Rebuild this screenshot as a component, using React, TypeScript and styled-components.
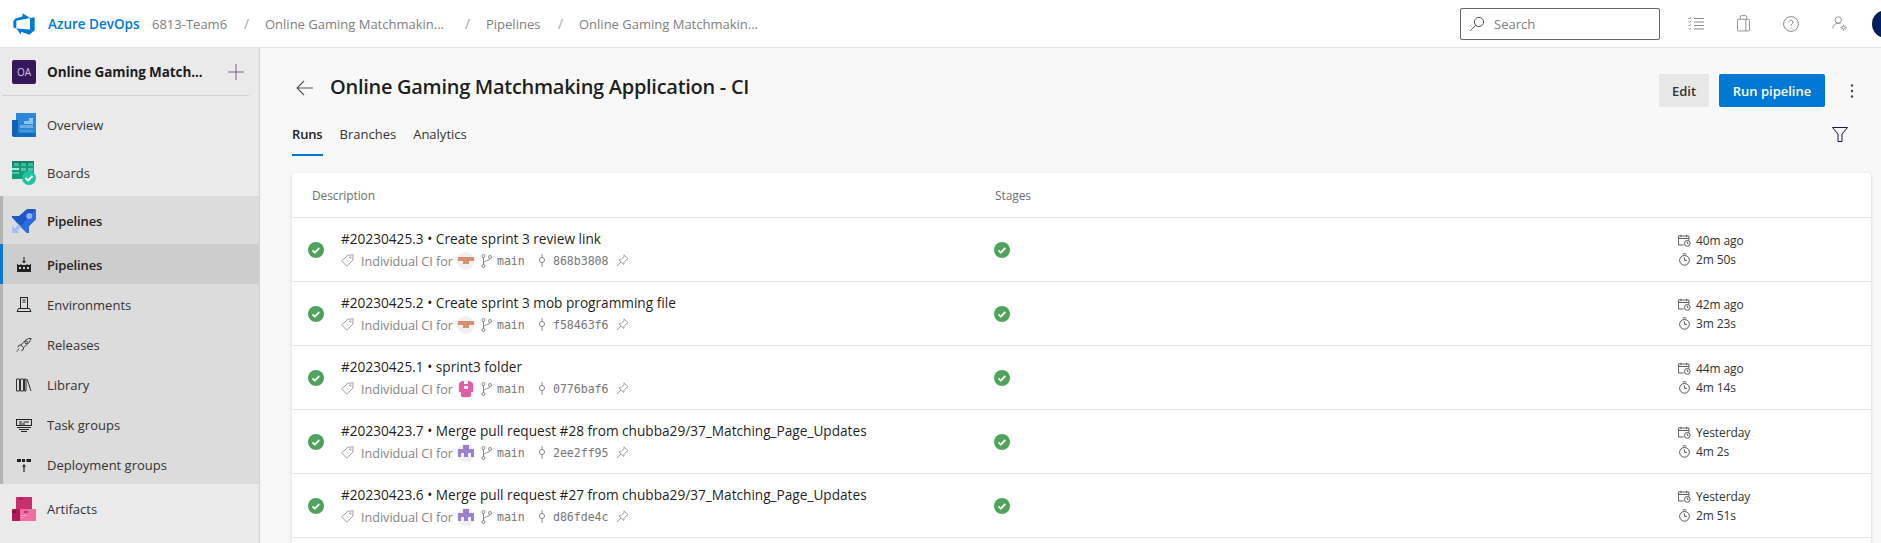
import React from 'react';
import styled, { createGlobalStyle } from 'styled-components';

const GlobalStyle = createGlobalStyle`
  html, body {
    margin: 0;
    height: 543px;
    overflow: hidden;
    background: #f8f8f8;
    font-family: "Open Sans", "Liberation Sans", sans-serif;
    color: rgba(0, 0, 0, 0.9);
  }
  * { box-sizing: border-box; }
  svg { flex-shrink: 0; }
`;

const Page = styled.div`
  display: flex;
  flex-direction: column;
  width: 1881px;
  height: 543px;
  overflow: hidden;
`;

/* top bar */
const Header = styled.header`
  display: flex;
  align-items: center;
  flex: 0 0 48px;
  height: 48px;
  padding-left: 12px;
  background: #fff;
  border-bottom: 1px solid #e2e2e2;
`;
const Brand = styled.div`
  font-size: 13.5px;
  font-weight: 600;
  color: #0078d4;
  margin-left: 12px;
  width: 104px;
  white-space: nowrap;
`;
const Crumb = styled.div<{ $width: number }>`
  width: ${(p) => p.$width}px;
  font-size: 13px;
  color: #808080;
  white-space: nowrap;
`;
const Slash = styled.div`
  width: 21px;
  font-size: 14px;
  color: #a6a6a6;
`;
const SearchBox = styled.div`
  display: flex;
  align-items: center;
  gap: 9px;
  width: 200px;
  height: 32px;
  margin-left: auto;
  padding-left: 8px;
  border: 1px solid #666;
  border-radius: 2px;
  font-size: 13px;
  color: #808080;
`;
const HeaderIcons = styled.div`
  display: flex;
  align-items: center;
  gap: 33px;
  width: 221px;
  height: 100%;
  padding-left: 28px;
  overflow: hidden;
`;
const Avatar = styled.div`
  flex: 0 0 28px;
  height: 28px;
  margin-left: -9px;
  border-radius: 50%;
  background: #00205b;
`;

const Body = styled.div`
  display: flex;
  flex: 1;
  min-height: 0;
`;

/* left navigation */
const Sidebar = styled.nav`
  flex: 0 0 260px;
  background: #eaeaea;
  border-right: 1px solid #d0d0d0;
`;
const ProjectRow = styled.div`
  display: flex;
  align-items: center;
  height: 48px;
  margin: 0 10px 4px 2px;
  padding: 0 5px 0 10px;
  border-bottom: 1px solid #d2d2d2;
`;
const ProjectBadge = styled.div`
  display: flex;
  align-items: center;
  justify-content: center;
  width: 24px;
  height: 24px;
  border-radius: 2px;
  background: #35185c;
  color: #cfc6dc;
  font-size: 10px;
`;
const ProjectName = styled.div`
  flex: 1;
  margin-left: 11px;
  font-size: 13.5px;
  font-weight: 700;
  letter-spacing: -0.1px;
  white-space: nowrap;
`;
const NavTop = styled.div`
  display: flex;
  align-items: center;
  gap: 11px;
  height: 48px;
  padding: 2px 0 0 12px;
  font-size: 13px;
  color: #333;
`;
const NavGroup = styled.div`
  background: #dcdcdc;
  border-left: 3px solid #b4b4b4;
`;
const NavGroupTitle = styled(NavTop)`
  padding-left: 9px;
  font-weight: 600;
  letter-spacing: -0.15px;
  color: #222;
`;
const NavSub = styled.div<{ $selected?: boolean }>`
  position: relative;
  display: flex;
  align-items: center;
  gap: 15px;
  height: 40px;
  padding: 1px 0 0 13px;
  font-size: 13px;
  letter-spacing: ${(p) => (p.$selected ? '-0.15px' : '0')};
  font-weight: ${(p) => (p.$selected ? 600 : 400)};
  color: ${(p) => (p.$selected ? '#222' : '#333')};
  background: ${(p) => (p.$selected ? '#cdcdcd' : 'transparent')};
  border-radius: ${(p) => (p.$selected ? '0 3px 3px 0' : '0')};
  ${(p) =>
    p.$selected &&
    `&::before {
      content: '';
      position: absolute;
      left: -3px;
      top: 0;
      bottom: 0;
      width: 3px;
      background: #0078d4;
    }`}
`;

/* main column */
const Main = styled.main`
  flex: 1;
  min-width: 0;
  padding: 26px 10px 0 32px;
  background: #f8f8f8;
`;
const TitleRow = styled.div`
  display: flex;
  align-items: center;
  height: 33px;
`;
const BackArrow = styled.div`
  display: flex;
  width: 38px;
  padding-left: 4px;
  margin-bottom: 6px;
`;
const Title = styled.h1`
  flex: 1;
  margin: 0 0 8px;
  font-size: 20px;
  font-weight: 600;
  letter-spacing: -0.28px;
  white-space: nowrap;
`;
const Button = styled.div<{ $primary?: boolean }>`
  display: flex;
  align-items: center;
  justify-content: center;
  width: ${(p) => (p.$primary ? 106 : 50)}px;
  height: 33px;
  margin-left: 10px;
  border-radius: 2px;
  font-size: 13px;
  font-weight: 600;
  background: ${(p) => (p.$primary ? '#0078d4' : '#e8e8e8')};
  color: ${(p) => (p.$primary ? '#fff' : '#333')};
`;
const More = styled.div`
  display: flex;
  justify-content: center;
  width: 46px;
  padding-left: 8px;
`;
const TabRow = styled.div`
  display: flex;
  align-items: center;
  gap: 17px;
  height: 49px;
  margin-top: 2px;
  padding-top: 1px;
  padding-right: 23px;
`;
const Tab = styled.div<{ $active?: boolean }>`
  position: relative;
  font-size: 13px;
  letter-spacing: ${(p) => (p.$active ? '-0.15px' : '0')};
  font-weight: ${(p) => (p.$active ? 600 : 400)};
  color: ${(p) => (p.$active ? '#222' : '#333')};
  ${(p) =>
    p.$active &&
    `&::after {
      content: '';
      position: absolute;
      left: 0;
      right: 0;
      bottom: -13px;
      height: 2px;
      background: #0078d4;
    }`}
`;
const FilterSlot = styled.div`
  display: flex;
  margin-left: auto;
`;
const Card = styled.section`
  margin-top: 15px;
  padding-bottom: 20px;
  background: #fff;
  border-radius: 4px 4px 0 0;
  box-shadow: 0 1px 4px rgba(0, 0, 0, 0.14);
`;
const HeadRow = styled.div`
  display: grid;
  grid-template-columns: 683px 1fr;
  align-items: center;
  height: 45px;
  padding-left: 20px;
  font-size: 12px;
  letter-spacing: -0.1px;
  color: #707070;
  border-bottom: 1px solid #e8e8e8;
`;
const Row = styled.div`
  display: grid;
  grid-template-columns: 33px 653px 684px 1fr;
  align-items: center;
  height: 64px;
  padding-left: 16px;
  border-bottom: 1px solid #e8e8e8;
`;
const RunInfo = styled.div`
  display: flex;
  flex-direction: column;
  gap: 4px;
`;
const RunTitle = styled.div`
  font-size: 13.65px;
  font-weight: 500;
  line-height: 18px;
  white-space: nowrap;
`;
const RunMeta = styled.div`
  display: flex;
  align-items: center;
  height: 18px;
  font-size: 12.7px;
  letter-spacing: -0.05px;
  color: #858585;
`;
const MetaText = styled.span`
  width: 90px;
  margin-left: 7px;
  white-space: nowrap;
`;
const Mono = styled.span<{ $width: number }>`
  width: ${(p) => p.$width}px;
  margin-left: 5px;
  font-family: "DejaVu Sans Mono", "Liberation Mono", monospace;
  font-size: 11.6px;
  color: #777;
`;
const AvatarCircle = styled.span`
  display: flex;
  align-items: center;
  justify-content: center;
  flex: 0 0 18px;
  height: 18px;
  margin: 0 6px;
  border-radius: 50%;
  background: #f0f0f0;
  overflow: hidden;
`;
const Stamps = styled.div`
  display: flex;
  flex-direction: column;
`;
const Stamp = styled.div`
  display: flex;
  align-items: center;
  gap: 5px;
  height: 19px;
  font-size: 12px;
  letter-spacing: -0.1px;
  color: #333;
`;

/* drawings */
const AzureLogo = () => (
  <svg width="24" height="24" viewBox="0 0 18 18" fill="#0078d4">
    <path d="M17 4v9.74l-4 3.28-6.2-2.26V17L3.29 12.41l10.23.8V4.44Zm-3.41.49L7.85 1v2.29L2.58 4.84 1 6.87v4.61l2.26 1V6.57z" />
  </svg>
);
const SearchIcon = () => (
  <svg width="16" height="16" viewBox="0 0 16 16" fill="none" stroke="#555" strokeWidth="1">
    <circle cx="10" cy="6" r="4.6" />
    <path d="M6.6 9.4L1.2 14.8" />
  </svg>
);
const TaskListIcon = () => (
  <svg width="16" height="16" viewBox="0 0 16 16" fill="none" stroke="#8a8a8a" strokeWidth="1">
    <path d="M6 2.5h10M6 6h10M6 9.5h10M6 13h10" />
    <path d="M.5 2l1 1 1.6-1.800M.5 5.500l1 1 1.600-1.800M.5 9l1 1 1.600-1.800M.5 12.500l1 1 1.600-1.800" />
  </svg>
);
const BagIcon = () => (
  <svg width="13" height="17" viewBox="0 0 14 18" fill="none" stroke="#8a8a8a" strokeWidth="1">
    <rect x="0.5" y="4.5" width="13" height="12.5" rx="1" />
    <path d="M3.5 4.5V2a1.500 1.500 0 0 1 1.500-1.500h4A1.500 1.500 0 0 1 10.500 2v2.500M9.500 4.500V17" />
  </svg>
);
const HelpIcon = () => (
  <svg width="16" height="16" viewBox="0 0 16 16" fill="none" stroke="#8a8a8a" strokeWidth="1">
    <circle cx="8" cy="8" r="7.400" />
    <path d="M6 6.200a2 2 0 1 1 3.200 1.600C8.400 8.400 8 8.800 8 9.800M8 11.400v1" />
  </svg>
);
const UserGearIcon = () => (
  <svg width="16" height="16" viewBox="0 0 18 18" fill="none" stroke="#8a8a8a" strokeWidth="1">
    <circle cx="7" cy="4.500" r="3.600" />
    <path d="M1 14c0-3.400 2.400-5.800 6-5.800 1 0 1.800.2 2.600.5" />
    <circle cx="13" cy="13" r="1.800" />
    <path d="M13 9.600v1.400M13 15v1.400M9.600 13H11M15 13h1.400M10.800 10.800l.8.8M14.400 14.400l.8.8M10.800 15.200l.8-.8M14.400 11.600l.8-.8" />
  </svg>
);
const PlusIcon = () => (
  <svg width="16" height="16" viewBox="0 0 16 16" stroke="#7a5f8a" strokeWidth="1">
    <path d="M0 8h16M8 0v16" />
  </svg>
);
const OverviewIcon = () => (
  <svg width="24" height="24" viewBox="0 0 24 24">
    <path d="M4 0h20v24H4z" fill="#2b88d8" />
    <path d="M0 7h6v17H2a2 2 0 0 1-2-2z" fill="#0f5fb5" />
    <path d="M17 5h4v6h-4zM12 8h5v3h-5z" fill="#8cc4f0" />
    <path d="M8 12h13v3H8z" fill="#6aaee6" />
    <path d="M8 17h13v2H8z" fill="#4a98dc" />
    <path d="M4 20h20v2a2 2 0 0 1-2 2H4z" fill="#0f6cbd" />
  </svg>
);
const BoardsIcon = () => (
  <svg width="24" height="24" viewBox="0 0 24 24">
    <path d="M0 0h22v18H0z" fill="#1a9a7d" />
    <path d="M0 0h22v4H0z" fill="#15806c" />
    <path d="M2 2h5v3H2zM9 2h5v3H9zM16 2h5v3h-5z" fill="#3dbb9d" />
    <path d="M0 7h7v2H0z" fill="#a6ecd8" />
    <path d="M0 11h7v2H0zM9 7h5v3H9zM16 7h5v3h-5z" fill="#4cc7a8" />
    <circle cx="17" cy="17" r="7" fill="#22c3a0" />
    <path d="M13.500 17l2.500 2.500 4.500-4.500" fill="none" stroke="#fff" strokeWidth="1.800" />
  </svg>
);
const PipelinesBigIcon = () => (
  <svg width="24" height="24" viewBox="0 0 24 24">
    <path d="M24 1.500V10l-7 7v7h-2l-3.500-3.500L5 14l-3-3.500L0 8.500V7h7l8-7h7.500A1.500 1.500 0 0 1 24 1.500z" fill="#1f57c8" />
    <path d="M24 1.500V10l-7 7v7h-2l-3.500-3.500-3-3L23.500.500c.300.200.500.600.500 1z" fill="#2f6be0" />
    <circle cx="17.300" cy="7" r="3" fill="#8fb1f2" />
    <path d="M0 16.500v7.500h7.500L5.200 21.700l4-4-2.400-2.400-4 4z" fill="#a4bdf3" />
  </svg>
);
const ArtifactsIcon = () => (
  <svg width="24" height="24" viewBox="0 0 24 24">
    <path d="M4 0h16v12H4z" fill="#c9306f" />
    <path d="M7 1h4v2H7z" fill="#a5245c" />
    <path d="M0 12h8v12H0z" fill="#b01a58" />
    <path d="M0 14h4v2H0z" fill="#7e1341" />
    <path d="M8 12h16v12H8z" fill="#ef6fa2" />
    <path d="M12 14h4v2h-4z" fill="#c9306f" />
    <path d="M9 18h5v1H9zM9 20h3v1H9z" fill="#f8b0cb" />
  </svg>
);
const PipelinesSmall = () => (
  <svg width="16" height="16" viewBox="0 0 16 16" fill="#222">
    <path d="M7.500 0h1v4h1.500L8 6.500 6 4h1.500z" />
    <path d="M1 7h1v1h2.500V7h1v1h5V7h1v1H14V7h1v8H1zM3 10v2h2v-2zm4 0v2h2v-2zm4 0v2h2v-2z" />
  </svg>
);
const EnvironmentsIcon = () => (
  <svg width="16" height="16" viewBox="0 0 16 16" fill="none" stroke="#222" strokeWidth="1">
    <rect x="4.500" y="0.500" width="7" height="11" />
    <path d="M6.500 3h3M6.500 5h3M2.500 11.500h11l1.500 3H1z" />
  </svg>
);
const ReleasesIcon = () => (
  <svg width="16" height="16" viewBox="0 0 18 16" fill="none" stroke="#222" strokeWidth="1">
    <path d="M17 .5c-4 0-7 2-9 5L5.500 8l3 3 2.500-2.500c3-2 5-4.500 6-8z" />
    <circle cx="11.500" cy="5" r="1.500" />
    <path d="M5.500 8L3 8.500 2 10.500M8.500 11l-.5 2.500-2 1M3.500 12l-2 2M1 15.500l1-1" />
  </svg>
);
const LibraryIcon = () => (
  <svg width="16" height="16" viewBox="0 0 16 16" fill="none" stroke="#333" strokeWidth="1">
    <path d="M.5 2h3v12h-3zM4.500 2h3v12h-3zM8.500 2h1.500v12H8.500zM11 2l4 12" />
  </svg>
);
const TaskGroupsIcon = () => (
  <svg width="16" height="16" viewBox="0 0 16 16" fill="none" stroke="#222" strokeWidth="1">
    <rect x="0.500" y="2.500" width="15" height="6" />
    <path d="M3 5h3M7.500 5H13M3 7h6M1 10.500h14M3 12.500h10M5 14.500h6" />
  </svg>
);
const DeploymentIcon = () => (
  <svg width="16" height="16" viewBox="0 0 16 16" fill="#222">
    <path d="M1 2h4v3H1zM6 2h3v3H6zM10.500 2H15v3h-4.500z" />
    <path d="M8 7l2 2.500H8.600V15H7.400V9.500H6z" />
  </svg>
);
const BackIcon = () => (
  <svg width="17" height="16" viewBox="0 0 17 16" fill="none" stroke="#555" strokeWidth="1.100">
    <path d="M17 8H1M8 1L1 8l7 7" />
  </svg>
);
const DotsIcon = () => (
  <svg width="4" height="14" viewBox="0 0 4 14" fill="#444">
    <circle cx="2" cy="1.500" r="1.200" />
    <circle cx="2" cy="7" r="1.200" />
    <circle cx="2" cy="12.500" r="1.200" />
  </svg>
);
const FilterIcon = () => (
  <svg width="16" height="15" viewBox="0 0 16 15" fill="none" stroke="#2b0f3f" strokeWidth="1">
    <path d="M.5 .5h15L10 7v7.500H6V7z" />
  </svg>
);
const SuccessIcon = () => (
  <svg width="16" height="16" viewBox="0 0 16 16">
    <circle cx="8" cy="8" r="8" fill="#4fa35c" />
    <path d="M4.500 8.300l2.300 2.300 4.500-4.600" fill="none" stroke="#fff" strokeWidth="1.800" />
  </svg>
);
const TagIcon = () => (
  <svg width="13" height="13" viewBox="0 0 14 14" fill="none" stroke="#9a9a9a" strokeWidth="1">
    <path d="M.8 7.500L7 1.500 13 .8l-.4 6-6.300 6.400z" />
    <circle cx="10.200" cy="3.700" r=".8" />
  </svg>
);
const BranchIcon = () => (
  <svg width="11" height="14" viewBox="0 0 11 14" fill="none" stroke="#8a8a8a" strokeWidth="1">
    <circle cx="2.500" cy="2" r="1.500" />
    <circle cx="2.500" cy="12" r="1.500" />
    <circle cx="9" cy="3" r="1.500" />
    <path d="M2.500 3.500v7M9 4.500c0 2.500-6.500 2-6.500 5" />
  </svg>
);
const CommitIcon = () => (
  <svg width="10" height="14" viewBox="0 0 10 14" fill="none" stroke="#8a8a8a" strokeWidth="1">
    <circle cx="4" cy="6" r="2.500" />
    <path d="M4 0v3.500M4 8.500V13" />
  </svg>
);
const PinIcon = () => (
  <svg width="13" height="13" viewBox="0 0 13 13" fill="none" stroke="#a0a0a0" strokeWidth="1">
    <path d="M8 .8l4.200 4.200-1.500.5-2.700 2.700-.3 2.300L3 5.800l2.300-.3L8 2.800zM5 8l-4 4" />
  </svg>
);
const CalendarIcon = () => (
  <svg width="13" height="13" viewBox="0 0 16 16" fill="none" stroke="#555" strokeWidth="1.200">
    <path d="M7 13.500H.5v-11h13V8M.5 5.500h13M3.500 1v2.500M10.500 1v2.500" />
    <circle cx="11.500" cy="11.500" r="3.500" />
    <path d="M11.500 9.500v2h1.500" />
  </svg>
);
const TimerIcon = () => (
  <svg width="13" height="13" viewBox="0 0 16 16" fill="none" stroke="#555" strokeWidth="1.200">
    <circle cx="8" cy="9" r="6" />
    <path d="M6 1h4M8 5.500V9h3" />
  </svg>
);

type Tint = 'salmon' | 'pink' | 'violet';

const Identicon = ({ tint }: { tint: Tint }) => {
  if (tint === 'salmon') {
    return (
      <svg width="18" height="18" viewBox="0 0 18 18" fill="#d98e72">
        <path d="M1 5h16v4h-5v3H6V9H1z" />
      </svg>
    );
  }
  if (tint === 'pink') {
    return (
      <svg width="18" height="18" viewBox="0 0 18 18" fill="#de5fa6">
        <path d="M2 1h5v3h4V1h5v11h-2v5H4v-5H2zM7 6v3h4V6z" />
      </svg>
    );
  }
  return (
    <svg width="18" height="18" viewBox="0 0 18 18" fill="#9b7fd0">
      <path d="M6 1h6v4h5v8h-3V9h-3v4H7V9H4v4H1V5h5z" />
    </svg>
  );
};

const runs: { id: string; message: string; tint: Tint; commit: string; when: string; took: string }[] = [
  { id: '#20230425.3', message: 'Create sprint 3 review link', tint: 'salmon', commit: '868b3808', when: '40m ago', took: '2m 50s' },
  { id: '#20230425.2', message: 'Create sprint 3 mob programming file', tint: 'salmon', commit: 'f58463f6', when: '42m ago', took: '3m 23s' },
  { id: '#20230425.1', message: 'sprint3 folder', tint: 'pink', commit: '0776baf6', when: '44m ago', took: '4m 14s' },
  { id: '#20230423.7', message: 'Merge pull request #28 from chubba29/37_Matching_Page_Updates', tint: 'violet', commit: '2ee2ff95', when: 'Yesterday', took: '4m 2s' },
  { id: '#20230423.6', message: 'Merge pull request #27 from chubba29/37_Matching_Page_Updates', tint: 'violet', commit: 'd86fde4c', when: 'Yesterday', took: '2m 51s' },
];

const App = () => (
  <Page>
    <GlobalStyle />
    <Header>
      <AzureLogo />
      <Brand>Azure DevOps</Brand>
      <Crumb $width={92}>6813-Team6</Crumb>
      <Slash>/</Slash>
      <Crumb $width={200}>Online Gaming Matchmakin...</Crumb>
      <Slash>/</Slash>
      <Crumb $width={72}>Pipelines</Crumb>
      <Slash>/</Slash>
      <Crumb $width={190}>Online Gaming Matchmakin...</Crumb>
      <SearchBox>
        <SearchIcon />
        Search
      </SearchBox>
      <HeaderIcons>
        <TaskListIcon />
        <BagIcon />
        <HelpIcon />
        <UserGearIcon />
        <Avatar />
      </HeaderIcons>
    </Header>
    <Body>
      <Sidebar>
        <ProjectRow>
          <ProjectBadge>OA</ProjectBadge>
          <ProjectName>Online Gaming Match...</ProjectName>
          <PlusIcon />
        </ProjectRow>
        <NavTop>
          <OverviewIcon />
          Overview
        </NavTop>
        <NavTop>
          <BoardsIcon />
          Boards
        </NavTop>
        <NavGroup>
          <NavGroupTitle>
            <PipelinesBigIcon />
            Pipelines
          </NavGroupTitle>
          <NavSub $selected>
            <PipelinesSmall />
            Pipelines
          </NavSub>
          <NavSub>
            <EnvironmentsIcon />
            Environments
          </NavSub>
          <NavSub>
            <ReleasesIcon />
            Releases
          </NavSub>
          <NavSub>
            <LibraryIcon />
            Library
          </NavSub>
          <NavSub>
            <TaskGroupsIcon />
            Task groups
          </NavSub>
          <NavSub>
            <DeploymentIcon />
            Deployment groups
          </NavSub>
        </NavGroup>
        <NavTop>
          <ArtifactsIcon />
          Artifacts
        </NavTop>
      </Sidebar>
      <Main>
        <TitleRow>
          <BackArrow>
            <BackIcon />
          </BackArrow>
          <Title>Online Gaming Matchmaking Application - CI</Title>
          <Button>Edit</Button>
          <Button $primary>Run pipeline</Button>
          <More>
            <DotsIcon />
          </More>
        </TitleRow>
        <TabRow>
          <Tab $active>Runs</Tab>
          <Tab>Branches</Tab>
          <Tab>Analytics</Tab>
          <FilterSlot>
            <FilterIcon />
          </FilterSlot>
        </TabRow>
        <Card>
          <HeadRow>
            <span>Description</span>
            <span>Stages</span>
          </HeadRow>
          {runs.map((run) => (
            <Row key={run.id}>
              <SuccessIcon />
              <RunInfo>
                <RunTitle>
                  {run.id} • {run.message}
                </RunTitle>
                <RunMeta>
                  <TagIcon />
                  <MetaText>Individual CI for</MetaText>
                  <AvatarCircle>
                    <Identicon tint={run.tint} />
                  </AvatarCircle>
                  <BranchIcon />
                  <Mono $width={41}>main</Mono>
                  <CommitIcon />
                  <Mono $width={63}>{run.commit}</Mono>
                  <PinIcon />
                </RunMeta>
              </RunInfo>
              <SuccessIcon />
              <Stamps>
                <Stamp>
                  <CalendarIcon />
                  {run.when}
                </Stamp>
                <Stamp>
                  <TimerIcon />
                  {run.took}
                </Stamp>
              </Stamps>
            </Row>
          ))}
        </Card>
      </Main>
    </Body>
  </Page>
);

export default App;
